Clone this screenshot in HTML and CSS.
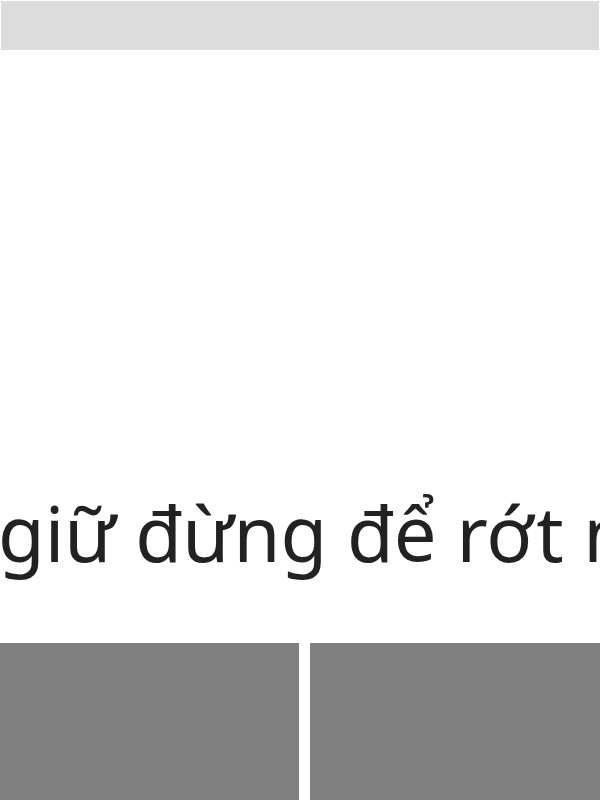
FILE: index.html
```html
<!DOCTYPE html>
<html lang="vi">
<head>
  <meta charset="utf-8" />
  <meta name="viewport" content="width=device-width, initial-scale=1.0" />
  <title>Slide</title>
  <link rel="stylesheet" href="styles.css">
</head>
<body>
  <div class="topbar"></div>
  <div class="stage">
    <p class="caption">giữ đừng để rớt nhé</p>
  </div>
  <div class="tiles">
    <div class="tile"></div>
    <div class="tile"></div>
  </div>
</body>
</html>
```

FILE: styles.css
```css
html, body {
  margin: 0;
  padding: 0;
  height: 100%;
  overflow: hidden;
  background: #fff;
}

body {
  font-family: "Noto Sans", sans-serif;
  color: #222;
}

.topbar {
  height: 49px;
  margin: 1px 1px 0;
  background: #dcdcdc;
}

.stage {
  height: 593px;
  display: flex;
  align-items: flex-end;
  overflow: hidden;
}

.caption {
  margin: 0 0 72px -2px;
  font-size: 76px;
  line-height: 1;
  white-space: nowrap;
}

.tiles {
  display: grid;
  grid-template-columns: 299px 1fr;
  gap: 11px;
  height: 157px;
}

.tile {
  background: #808080;
}
```
